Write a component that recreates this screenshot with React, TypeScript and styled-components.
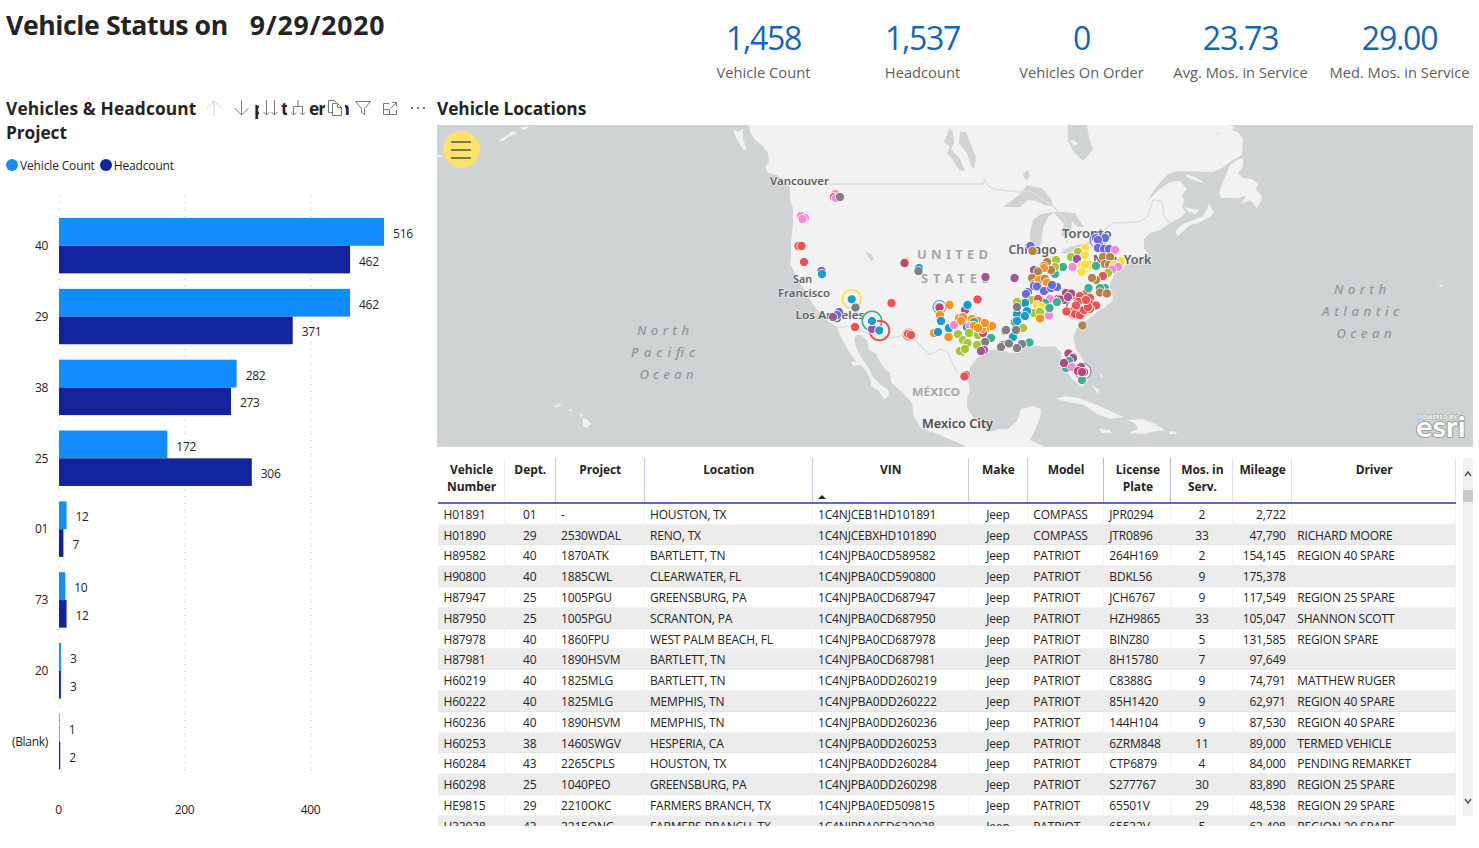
import React from "react";
import styled, { createGlobalStyle } from "styled-components";

const GlobalStyle = createGlobalStyle`
  * { box-sizing: border-box; }
  html, body { margin: 0; background: #fff; }
  body { font-family: "Open Sans", "Noto Sans", sans-serif; color: #252423; overflow: hidden; }
`;

const Page = styled.main`
  width: 1479px;
  height: 848px;
  overflow: hidden;
  display: flex;
  flex-direction: column;
`;
const Header = styled.header`
  height: 96px;
  display: flex;
  justify-content: space-between;
`;
const TitleGroup = styled.div`
  display: flex;
  padding: 6px 0 0 6px;
  gap: 22px;
`;
const Title = styled.h1<{ $spacing: number }>`
  margin: 0;
  font-size: 26.67px;
  line-height: 38px;
  font-weight: 700;
  letter-spacing: ${(p) => p.$spacing}px;
  white-space: nowrap;
`;
const Kpis = styled.div`
  display: flex;
  width: 795px;
  padding-top: 16px;
`;
const Kpi = styled.div`
  width: 159px;
  display: flex;
  flex-direction: column;
  align-items: center;
  white-space: nowrap;
`;
const KpiValue = styled.div`
  font-size: 32px;
  line-height: 43px;
  letter-spacing: -1.25px;
  color: #1267b9;
`;
const KpiLabel = styled.div`
  margin-top: 3px;
  font-size: 14.67px;
  line-height: 20px;
  letter-spacing: 0.02px;
  color: #605e5c;
`;
const Body = styled.div`
  display: flex;
  flex: 1;
  min-height: 0;
`;
const ChartPanel = styled.section`
  width: 437px;
  position: relative;
  display: flex;
  flex-direction: column;
`;
const Heading = styled.h2`
  margin: 0;
  padding-left: 6px;
  font-size: 17.33px;
  line-height: 24px;
  font-weight: 700;
  letter-spacing: -0.08px;
  white-space: nowrap;
`;
const WideLine = styled.span`
  display: block;
  letter-spacing: 0.12px;
`;
const Toolbar = styled.div`
  position: absolute;
  left: 200px;
  top: 0;
  height: 24px;
  display: flex;
  background: #fff;
`;
const Cell = styled.span<{ $w: number; $faded?: boolean }>`
  width: ${(p) => p.$w}px;
  display: flex;
  align-items: center;
  justify-content: center;
  color: ${(p) => (p.$faded ? "#d0cfce" : "#7a7876")};
`;
const Fragment = styled.span<{ $w: number; $end?: boolean }>`
  width: ${(p) => p.$w}px;
  overflow: hidden;
  display: flex;
  justify-content: ${(p) => (p.$end ? "flex-end" : "flex-start")};
  font-size: 17.33px;
  line-height: 24px;
  font-weight: 700;
  letter-spacing: -0.9px;
`;
const Legend = styled.div`
  display: flex;
  align-items: center;
  height: 18px;
  margin-top: 12px;
  padding-left: 6px;
  gap: 5px;
  font-size: 12px;
  letter-spacing: -0.15px;
`;
const LegendItem = styled.span`
  display: flex;
  align-items: center;
  gap: 2px;
`;
const LegendDot = styled.i<{ $color: string }>`
  width: 12px;
  height: 12px;
  border-radius: 50%;
  background: ${(p) => p.$color};
`;
const ChartSvg = styled.svg`
  display: block;
  margin-top: 11px;
`;
const MainPanel = styled.section`
  flex: 1;
  display: flex;
  flex-direction: column;
`;
const MapHeading = styled(Heading)`
  padding-left: 0;
  height: 29px;
`;
const MapBox = styled.div`
  position: relative;
  width: 1036px;
  height: 322px;
  background: #cfd3d4;
`;
const MapSvg = styled.svg`
  display: block;
`;
const MenuButton = styled.button`
  position: absolute;
  left: 5.5px;
  top: 6px;
  width: 37px;
  height: 37px;
  border: 0;
  padding: 0;
  border-radius: 50%;
  background: #ffe26c;
  display: flex;
  flex-direction: column;
  align-items: center;
  justify-content: center;
  gap: 6px;
`;
const MenuBar = styled.i`
  width: 20px;
  height: 2px;
  background: #7d7660;
`;
const TableArea = styled.div`
  display: flex;
  margin-top: 11px;
  gap: 7px;
`;
const Grid = styled.div`
  width: 1019px;
  height: 368px;
  padding-left: 1px;
  overflow: hidden;
`;
const columns = "66.5px 51px 89px 168px 156px 59.3px 76px 67.7px 61.3px 59px 164.2px";
const HeadRow = styled.div`
  display: grid;
  grid-template-columns: ${columns};
  height: 45.9px;
  border-bottom: 2px solid #5b6abf;
`;
const HeadCell = styled.div<{ $line: string }>`
  position: relative;
  padding: 3px 0 0 1.5px;
  text-align: center;
  font-size: 12px;
  line-height: 17px;
  font-weight: 700;
  letter-spacing: -0.08px;
  border-right: 1px solid ${(p) => p.$line};
`;
const SortMark = styled.i`
  position: absolute;
  left: 5px;
  bottom: 3px;
  border: 4px solid transparent;
  border-top-width: 0;
  border-bottom-color: #252423;
`;
const Row = styled.div<{ $alt: boolean }>`
  display: grid;
  grid-template-columns: ${columns};
  height: 20.8px;
  background: ${(p) => (p.$alt ? "#ececec" : "#fff")};
  border-bottom: 1px solid ${(p) => (p.$alt ? "#e4e4e4" : "#f1f1f1")};
`;
const DataCell = styled.div<{ $align: string }>`
  text-align: ${(p) => p.$align};
  padding: 0 5px 0 5.5px;
  font-size: 12px;
  line-height: 21px;
  letter-spacing: -0.17px;
  white-space: nowrap;
  border-right: 1px solid rgba(240, 240, 240, 0.8);
`;
const Scrollbar = styled.div`
  width: 10px;
  height: 358px;
  background: #f1f1f1;
  display: flex;
  flex-direction: column;
  align-items: center;
`;
const ScrollThumb = styled.i`
  width: 10px;
  height: 12px;
  margin-top: 12px;
  margin-bottom: auto;
  background: #c8c8c8;
`;
const ScrollArrow = styled.svg<{ $mt?: number; $mb?: number }>`
  margin-top: ${(p) => p.$mt ?? 0}px;
  margin-bottom: ${(p) => p.$mb ?? 0}px;
`;

const kpis = [
  ["1,458", "Vehicle Count"],
  ["1,537", "Headcount"],
  ["0", "Vehicles On Order"],
  ["23.73", "Avg. Mos. in Service"],
  ["29.00", "Med. Mos. in Service"],
];

const groups: [string, number, number][] = [
  ["40", 516, 462],
  ["29", 462, 371],
  ["38", 282, 273],
  ["25", 172, 306],
  ["01", 12, 7],
  ["73", 10, 12],
  ["20", 3, 3],
  ["(Blank)", 1, 2],
];

const heads: [string, string][] = [
  ["Vehicle Number", "#f0f0f6"],
  ["Dept.", "#c8cbe8"],
  ["Project", "#c8cbe8"],
  ["Location", "#c8cbe8"],
  ["VIN", "#c8cbe8"],
  ["Make", "#c8cbe8"],
  ["Model", "#b4b8dd"],
  ["License Plate", "#b4b8dd"],
  ["Mos. in Serv.", "#e2e2f2"],
  ["Mileage", "#e2e2f2"],
  ["Driver", "#e2e2f2"],
];
const aligns = ["left", "center", "left", "left", "left", "center", "left", "left", "center", "right", "left"];

const rows = `H01891|01|-|HOUSTON, TX|1C4NJCEB1HD101891|Jeep|COMPASS|JPR0294|2|2,722|
H01890|29|2530WDAL|RENO, TX|1C4NJCEBXHD101890|Jeep|COMPASS|JTR0896|33|47,790|RICHARD MOORE
H89582|40|1870ATK|BARTLETT, TN|1C4NJPBA0CD589582|Jeep|PATRIOT|264H169|2|154,145|REGION 40 SPARE
H90800|40|1885CWL|CLEARWATER, FL|1C4NJPBA0CD590800|Jeep|PATRIOT|BDKL56|9|175,378|
H87947|25|1005PGU|GREENSBURG, PA|1C4NJPBA0CD687947|Jeep|PATRIOT|JCH6767|9|117,549|REGION 25 SPARE
H87950|25|1005PGU|SCRANTON, PA|1C4NJPBA0CD687950|Jeep|PATRIOT|HZH9865|33|105,047|SHANNON SCOTT
H87978|40|1860FPU|WEST PALM BEACH, FL|1C4NJPBA0CD687978|Jeep|PATRIOT|BINZ80|5|131,585|REGION SPARE
H87981|40|1890HSVM|BARTLETT, TN|1C4NJPBA0CD687981|Jeep|PATRIOT|8H15780|7|97,649|
H60219|40|1825MLG|BARTLETT, TN|1C4NJPBA0DD260219|Jeep|PATRIOT|C8388G|9|74,791|MATTHEW RUGER
H60222|40|1825MLG|MEMPHIS, TN|1C4NJPBA0DD260222|Jeep|PATRIOT|85H1420|9|62,971|REGION 40 SPARE
H60236|40|1890HSVM|MEMPHIS, TN|1C4NJPBA0DD260236|Jeep|PATRIOT|144H104|9|87,530|REGION 40 SPARE
H60253|38|1460SWGV|HESPERIA, CA|1C4NJPBA0DD260253|Jeep|PATRIOT|6ZRM848|11|89,000|TERMED VEHICLE
H60284|43|2265CPLS|HOUSTON, TX|1C4NJPBA0DD260284|Jeep|PATRIOT|CTP6879|4|84,000|PENDING REMARKET
H60298|25|1040PEO|GREENSBURG, PA|1C4NJPBA0DD260298|Jeep|PATRIOT|S277767|30|83,890|REGION 25 SPARE
HE9815|29|2210OKC|FARMERS BRANCH, TX|1C4NJPBA0ED509815|Jeep|PATRIOT|65501V|29|48,538|REGION 29 SPARE
H32028|43|2215ONG|FARMERS BRANCH, TX|1C4NJPBA0ED632028|Jeep|PATRIOT|65532V|5|63,408|REGION 29 SPARE`
  .split("\n")
  .map((line) => line.split("|"));

const palette: Record<string, string> = {
  b: "#149ece", r: "#ed5151", g: "#a7c636", p: "#9e559c", o: "#fc921f", y: "#ffde3e",
  k: "#f789d8", n: "#b7814a", t: "#3caf99", i: "#6b6bd6", m: "#b54779", e: "#7f7f7f",
};

// Map pins: colour key, x, y
const pins = `k835.5,194 r834,197 k836,198 e840,197 k801,216 k805,218 k802.5,219 r798.5,246 r801.5,246 r804,262
p821.5,271 b822,274 y906,261 m904.5,263 b919,268 e918.5,271 p985.5,277 p1014.5,278 i1030.5,246 n1032.5,251
e855.5,307.5 r891.5,303 r855,327 i839,312 i837,315 p833,317 p872,329 r908,334 r911,335 r966,375 r964.5,376.5
b939,307 m939.5,307.5 o949.5,305 p965,310 b967.5,305 r977.5,299.5 o940,315 b941,321 o959,318 o963,317 o961,321 b949,328 o934,333 b938,332 o948.5,337
k954,325 o972,319 o978,321 t974,322 o986,325 o992,326 o985,330 b967,327 k970,326 o974,326 g958,334 g969,333 g963,340 g978,335 g967.5,343 p983,333 t991,338 e985,342 g977,345 r961,352 g960,351 g965,349 p984,350 p981,351 o982,329
y1085,248 i1096,238 i1099,243 i1105,238 i1098,240 i1098,248 i1104,249 i1109,249 k1115,250 n1103,257 n1110,257 n1105,264 n1109,265
g1078,252 g1071,257 y1085,255 p1077,259 g1056,260 t1063,267 t1055,274 g1055,267 k1072.5,267 y1082,265 y1090,265 y1085,264.5 y1081.5,272 t1096,266 y1114,265 y1121,261 k1118,267 k1112,269.5 g1108,273 r1103,276 n1096,280 n1092,278
n1047,262 n1044,266 n1051,270 p1034,270 o1044,268 n1038,271.5 n1032,278 n1034,284 n1042,279 o1039,280 n1045,279 o1047,282.5
i1028,292 i1034,286 i1037,286.5 i1044,291 i1051,288 i1057,287 i1052,285 i1026,294
t1105,288 t1100,288 n1087,292 t1088.5,288 n1100,292.5 n1107,293.5
m1058,299 m1066,293 m1071,293.5 k1050,299 t1045,303 m1064,300 m1060,299.5 t1057,302 p1068,297
g1032,300 r1038,299 y1037,305 y1042,307 g1034,313 g1040,312 o1040,318.5 k1049,315.5 t1049.5,308
b1025,303 b1027,311 b1017,314 b1025,316 b1015,322 b1013,337 g1017,302 e1017,307 g1023,328 b1017,321
r1080,296 r1085,300 r1090,298 r1078,302 n1074,310 r1090,304 r1096,305.5 n1090,309 r1075,314 r1080,315 r1084,310 r1088,307 r1066.5,311.5 r1076,305.5 r1086,300
n1082.5,325.5 e1005,331 e1006,330 e1016,330 o985,323 t1029.5,342.5 e1003,345 e1001,347 e1009,343.5 e1022,344 e1017,348 o978,328
m1068.5,353.5 m1073,357 p1073,358 t1069,361 t1066,368 m1064,363 k1072,367 m1081,367 m1078,371 t1082,380 m1084,372 m1082,372`
  .trim()
  .split(/\s+/)
  .map((s) => {
    const [x, y] = s.slice(1).split(",").map(Number);
    return { color: palette[s[0]], x, y };
  });

const land =
  "M748.7 125L750 132 755 140 762 145 768 153 769 162 765 167 768 173 777 175 786 182 790 188 790 200 793 208 793 222 791 243 791 257 790 264 795 273 800 283 805 290 812 303 820 313 828 321 837 327 841 338 850 353 856 361 851 362 853 366 861 365 868 374 871 381 871 386 878 390 884 399 889 396 888 390 881 385 873 377 868 367 861 357 856 347 854 338 857 335 861 335 867 341 869 350 876 354 880 362 885 369 890 373 891 382 903 393 912 403 914 417 921 428 940 435 963 445 966 447 1045 447 1030 440 1034 432 1040 418 1041 409 1033 406 1021 409 1017 421 1008 429 1000 429 988 432 981 427 973 417 967 408 967 398 970 391 968 380 970 367 977 358 990 350 1000 349 1010 353 1020 353 1018 348 1030 345 1045 347 1055 346 1061 352 1061 363 1067 372 1073 380 1082 387 1088 381 1089 370 1083 360 1076 349 1073 337 1077 328 1087 320 1097 312 1105 307 1113 300 1112 292 1109 285 1116 272 1124 267 1130 261 1145 258 1149 254 1144 249 1144 239 1150 233 1160 230 1170 223 1180 218 1186 212 1182 207 1184 200 1182 195 1187 189 1180 181 1170 182 1160 189 1147 201 1156 187 1168 174 1177 171 1213 172 1222 168 1233 160 1242 155 1243 139 1238 132 1232 130 1235 127 1229 125Z";
const islands = [
  "M733.3 129L738 132 743 129 743 138 747 151 742 148 736 138Z",
  "M1175 232L1183 224 1193 220 1202 217 1206 211 1209 203 1212 210 1215 211 1210 217 1198 223 1190 225 1178 236Z",
  "M1184 206L1192 209 1200 210 1195 214 1187 211Z",
  "M1185 174L1196 177 1204 183 1196 181 1187 177Z",
  "M1243 158L1237 160 1230 165 1225 177 1219 192 1221 198 1237 198 1246 196 1241 204 1250 200 1257 208 1262 200 1261 195 1256 190 1258 184 1252 179 1243 178 1238 173 1243 166Z",
  "M1055 399L1066 396 1079 398 1092 403 1104 408 1124 417 1110 419 1097 414 1084 405 1069 402Z",
  "M1099 429L1110 430 1112 433 1102 433Z",
  "M1127 420L1142 419 1155 424 1165 430 1152 432 1144 434 1129 433 1138 429 1135 423Z",
  "M1169 431L1177 432 1176 434 1169 434Z",
  "M498 141L506 136 513 131 518 133 508 137 503 141Z",
  "M520 128L530 126 524 130Z",
  "M437 154L444 157 438 157Z",
  "M583 418L588 420 591 424 587 428 583 426Z",
  "M553 407L558 404 562 405 558 407Z",
  "M568 409L572 410 571 412Z",
  "M578 413L583 415 582 417Z",
  "M1092 385L1099 390 1098 394Z",
  "M1100 373L1103 376 1101 378Z",
  "M1439 284L1444 286 1440 287Z",
];
const lakes = [
  "M1067.5 125L1087 125 1089 138 1093 150 1083 161 1074 152 1068 141Z",
  "M960 132L966 132 971 145 976 158 974 169 971 166 967 153 959 143Z",
  "M950 128L953 133 954 143 951 149 960 159 965 171 959 170 952 158 947 153 950 147 944 142Z",
  "M1023 173L1028 170 1030 176 1027 180 1024 178Z",
  "M1003 207L1019 195 1027 185 1034 187 1042 188 1051 199 1053 206 1045 205 1036 201 1028 200 1020 207Z",
  "M1031 247L1030 233 1033 220 1041 214 1055 212 1048 217 1043 228 1041 244 1036 250Z",
  "M1053 212L1063 212 1075 213 1079 220 1084 227 1078 227 1072 221 1071 231 1066 239 1061 235 1064 224 1057 216Z",
  "M1061 253L1067 248 1080 244 1092 241 1084 248 1068 254Z",
  "M1092 239L1100 236 1110 232 1109 236 1096 241Z",
  "M865 252L871 254 874 259 871 261Z",
  "M1214 136L1221 131 1218 134Z",
];
const borders =
  "M801 184H983L985 180 987 185 993 189 1020 192 1030 191 1052 205 1066 220 1067 243M1062 250L1090 242 1113 223 1138 222 1147 217 1153 200 1162 201 1164 217 1170 223M838 327L850 326.5 867 333 890 338 908 335 917 342 930 355 941 349 948 353 957 373";

const labels: [string, number, number, number, number, string, number][] = [
  ["Vancouver", 770, 184.5, 59, 11.5, "#5e5e5e", 600],
  ["San", 793, 282.5, 19, 11.5, "#5e5e5e", 600],
  ["Francisco", 778, 296.5, 52, 11.5, "#5e5e5e", 600],
  ["Los Angeles", 795.5, 319, 69, 11.5, "#5e5e5e", 600],
  ["Chicago", 1008.5, 254, 48, 12, "#5e5e5e", 600],
  ["Toronto", 1062, 238, 49.5, 12, "#5e5e5e", 600],
  ["New York", 1093, 264, 58.5, 12, "#5e5e5e", 600],
  ["Mexico City", 922, 427.5, 71, 12.5, "#4d4d4d", 600],
  ["UNITED", 917, 258.5, 71, 13, "#a4a8a9", 700],
  ["STATES", 921, 282.5, 68, 13, "#a4a8a9", 700],
  ["MÉXICO", 912, 396, 48, 11, "#a4a8a9", 700],
];
const seas: [string, number, number, number][] = [
  ["North", 637, 335, 52],
  ["Pacific", 631, 357, 64],
  ["Ocean", 639.5, 379, 54],
  ["North", 1334, 294, 52],
  ["Atlantic", 1322, 316, 77],
  ["Ocean", 1336.5, 338, 55],
];

function Chart() {
  const top = 185;
  return (
    <ChartSvg width="430" height="640" viewBox={`0 ${top} 430 640`} fontSize="12" fill="#252423">
      {[0, 200, 400].map((v) => (
        <g key={v}>
          <line x1={59 + v * 0.63} x2={59 + v * 0.63} y1="195" y2="776" stroke="#d2d2d2" strokeDasharray="1 6" strokeWidth="1.5" />
          <text x={58.5 + v * 0.63} y="814" textAnchor="middle" letterSpacing="-0.3">{v}</text>
        </g>
      ))}
      {groups.map(([name, a, b], i) => {
        const y = 218 + i * 70.85;
        return (
          <g key={name}>
            <text x="48" y={y + 32} textAnchor="end" letterSpacing="-0.3">{name}</text>
            <rect x="59" y={y} width={a * 0.63} height="27.8" fill="#118dff" />
            <rect x="59" y={y + 27.8} width={b * 0.63} height="27.6" fill="#12239e" />
            <text x={68 + a * 0.63} y={y + 20} letterSpacing="-0.3">{a}</text>
            <text x={68 + b * 0.63} y={y + 47.600} letterSpacing="-0.3">{b}</text>
          </g>
        );
      })}
    </ChartSvg>
  );
}

function VehicleMap() {
  return (
    <MapSvg width="1036" height="322" viewBox="437 125 1036 322">
      <path d={land} fill="#f2f2f2" />
      {islands.map((d) => <path key={d} d={d} fill="#f2f2f2" />)}
      {lakes.map((d) => <path key={d} d={d} fill="#cfd3d4" />)}
      <path d="M1070 141L1074 140 1078 144 1074 146Z" fill="#f2f2f2" />
      <path d={borders} fill="none" stroke="#dcdcdc" strokeWidth="1.3" />
      <g fontFamily='"Noto Sans", "Open Sans", sans-serif'>
        {labels.map(([t, x, y, w, size, color, weight]) => (
          <text key={t} x={x} y={y} textLength={w} fontSize={size} fontWeight={weight} fill={color}
            lengthAdjust={t === "UNITED" || t === "STATES" ? "spacing" : "spacingAndGlyphs"}
            stroke="#f5f5f5" strokeWidth="1.6" strokeOpacity=".7" paintOrder="stroke">{t}</text>
        ))}
        {seas.map(([t, x, y, w]) => (
          <text key={t + x} x={x} y={y} textLength={w} fontSize="13" fontStyle="italic" fontWeight="500" fill="#8f9698">{t}</text>
        ))}
      </g>
      <g fill="none" strokeWidth="1.6">
        <circle cx="851.7" cy="299" r="9.3" stroke="#ffde3e" />
        <circle cx="872" cy="321" r="9.8" stroke="#3caf99" />
        <circle cx="879.5" cy="330.5" r="9.8" stroke="#ed5151" strokeWidth="2" />
        <circle cx="939.5" cy="307" r="6.5" stroke="#149ece" strokeWidth="1" />
        <circle cx="1098" cy="240" r="8" stroke="#6b6bd6" strokeWidth="1" />
        <circle cx="1083" cy="371.5" r="8" fill="#fff" stroke="#b54779" strokeWidth="1" />
        <circle cx="1077" cy="308" r="10.5" stroke="#ed5151" />
        <circle cx="908.5" cy="334.5" r="5.5" stroke="#ed5151" strokeWidth="1" />
        <circle cx="1086" cy="265" r="7" stroke="#ffde3e" strokeWidth="1" />
      </g>
      {pins.map((p, i) => (
        <circle key={i} cx={p.x} cy={p.y} r="4.6" fill={p.color} stroke="#fff" strokeWidth="1" strokeOpacity=".8" />
      ))}
      {[[851.7, 299.3], [872, 321], [879.3, 330.5]].map(([x, y]) => (
        <circle key={x} cx={x} cy={y} r="4.6" fill="#149ece" stroke="#fff" strokeWidth="1" />
      ))}
      <g fill="#fff" stroke="#8b8f90" strokeWidth="2" strokeOpacity=".75" paintOrder="stroke" strokeLinejoin="round">
        <text x="1416" y="437" fontSize="28" fontWeight="700" fontFamily='Lato, "Open Sans", sans-serif' textLength="49.500" lengthAdjust="spacingAndGlyphs">esri</text>
        <text x="1418" y="419" fontSize="5.6" fontWeight="700" textLength="39" lengthAdjust="spacingAndGlyphs" strokeWidth="1">POWERED BY</text>
      </g>
    </MapSvg>
  );
}

const Icon = ({ size = 16, children }: { size?: number; children: React.ReactNode }) => (
  <svg width={size} height={size} viewBox="0 0 16 16" fill="none" stroke="currentColor" strokeWidth="1">{children}</svg>
);

function VisualToolbar() {
  return (
    <Toolbar>
      <Cell $w={28} $faded><Icon><path d="M8 16V1M1 8L8 1l7 7" /></Icon></Cell>
      <Cell $w={26}><Icon><path d="M8.5 0v15M1.5 8l7 7 7-7" /></Icon></Cell>
      <Fragment $w={5}>p</Fragment>
      <Cell $w={22}><Icon><path d="M4.5 0v15M1.5 12l3 3 3-3M12.5 0v15M9.5 12l3 3 3-3" /></Icon></Cell>
      <Fragment $w={6}>t</Fragment>
      <Cell $w={22}><Icon><path d="M8 0v6.5M3.5 15V6.5h9V15M1 12.5L3.5 15 6 12.5M10 12.5l2.5 2.5 2.5-2.5" /></Icon></Cell>
      <Fragment $w={16}>er</Fragment>
      <Cell $w={20}><Icon><path d="M5.5 12.5h-4v-12h6l2 2M5.5 3.5h5l4 4v8h-9zM10.5 3.5v4h4" /></Icon></Cell>
      <Fragment $w={4} $end>n</Fragment>
      <Cell $w={27}><Icon><path d="M.5 1.5h15l-6 7v6l-3-2v-4z" /></Icon></Cell>
      <Cell $w={28}><Icon><path d="M7 3.5H1.5v11h13V10M1.5 9.5h6v5M10.5 2.5h4v4M14.5 2.5l-6 6" /></Icon></Cell>
      <Cell $w={28}><Icon><path d="M1 8h2M7 8h2M13 8h2" strokeWidth="2" /></Icon></Cell>
    </Toolbar>
  );
}

export default function App() {
  return (
    <Page>
      <GlobalStyle />
      <Header>
        <TitleGroup>
          <Title $spacing={-0.42}>Vehicle Status on</Title>
          <Title $spacing={0.75}>9/29/2020</Title>
        </TitleGroup>
        <Kpis>
          {kpis.map(([v, l]) => (
            <Kpi key={l}>
              <KpiValue>{v}</KpiValue>
              <KpiLabel>{l}</KpiLabel>
            </Kpi>
          ))}
        </Kpis>
      </Header>
      <Body>
        <ChartPanel>
          <Heading><WideLine>Vehicles &amp; Headcount</WideLine>Project</Heading>
          <VisualToolbar />
          <Legend>
            <LegendItem><LegendDot $color="#118dff" />Vehicle Count</LegendItem>
            <LegendItem><LegendDot $color="#12239e" />Headcount</LegendItem>
          </Legend>
          <Chart />
        </ChartPanel>
        <MainPanel>
          <MapHeading>Vehicle Locations</MapHeading>
          <MapBox>
            <VehicleMap />
            <MenuButton aria-label="Menu"><MenuBar /><MenuBar /><MenuBar /></MenuButton>
          </MapBox>
          <TableArea>
            <Grid>
              <HeadRow>
                {heads.map(([t, line]) => (
                  <HeadCell key={t} $line={line}>{t}{t === "VIN" && <SortMark />}</HeadCell>
                ))}
              </HeadRow>
              {rows.map((r, i) => (
                <Row key={r[0]} $alt={i % 2 === 1}>
                  {r.map((c, j) => <DataCell key={j} $align={aligns[j]}>{c}</DataCell>)}
                </Row>
              ))}
            </Grid>
            <Scrollbar>
              <ScrollArrow $mt={12} width="8" height="8" viewBox="0 0 8 8" fill="none" stroke="#505050" strokeWidth="1.4"><path d="M1 6l3-4 3 4" /></ScrollArrow>
              <ScrollThumb />
              <ScrollArrow $mb={11} width="8" height="8" viewBox="0 0 8 8" fill="none" stroke="#505050" strokeWidth="1.4"><path d="M1 2l3 4 3-4" /></ScrollArrow>
            </Scrollbar>
          </TableArea>
        </MainPanel>
      </Body>
    </Page>
  );
}
